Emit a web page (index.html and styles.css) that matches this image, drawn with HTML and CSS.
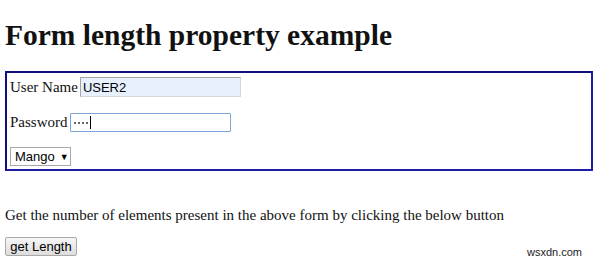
FILE: index.html
```html
<!DOCTYPE html>
<html>
<head>
<meta charset="utf-8">
<link rel="stylesheet" href="styles.css">
</head>
<body>
<h1 class="title">Form length property example</h1>
<form class="box">
  <div class="row"><span>User Name</span><input class="field filled" type="text" value="USER2"></div>
  <div class="row"><span>Password</span><span class="field focused"><span class="dot"></span><span class="dot"></span><span class="dot"></span><span class="dot"></span><span class="caret"></span></span></div>
  <div class="row"><span class="select">Mango <span class="arrow">▼</span></span></div>
</form>
<p class="info">Get the number of elements present in the above form by clicking the below button</p>
<button class="btn" type="button">get Length</button>
<span class="mark">wsxdn.com</span>
</body>
</html>
```
FILE: styles.css
```css
html, body { margin: 0; padding: 0; background: #fff; }
body {
  font-family: "Liberation Serif", "Times New Roman", serif;
  font-size: 15px;
  color: #111;
  padding: 0 5px;
  position: relative;
  height: 264px;
  overflow: hidden;
}
.title {
  font-size: 29.5px;
  font-weight: bold;
  margin: 0;
  padding-top: 18px;
  line-height: 34px;
  height: 53px;
}
.box {
  box-sizing: border-box;
  width: 588px;
  height: 100px;
  border: 2px solid #10107a;
  border-right-color: #1d1da8;
  border-bottom-color: #1d1da8;
  padding: 4px 3px;
  display: flex;
  flex-direction: column;
  gap: 16px;
}
.row {
  display: flex;
  align-items: center;
  gap: 2px;
  height: 20px;
}
.field {
  box-sizing: border-box;
  width: 161px;
  height: 20px;
  font-family: "Liberation Sans", Arial, sans-serif;
  font-size: 13px;
  padding: 0 2px;
  margin: 0;
  color: #000;
}
.filled {
  background: #e8f0fe;
  border: 1px solid #a6a6a6;
  border-right-color: #d8d8d8;
  border-bottom-color: #d8d8d8;
  outline: none;
}
.focused {
  display: flex;
  align-items: center;
  gap: 2px;
  height: 19px;
  padding-left: 3px;
  border: 1px solid #7ea5d6;
  border-radius: 1px;
  background: #fff;
}
.dot { width: 2px; height: 2px; border-radius: 50%; background: #333; }
.caret { width: 1px; height: 13px; background: #000; margin-left: 0; }
.select {
  box-sizing: border-box;
  display: inline-flex;
  align-items: center;
  height: 19px;
  width: 61px;
  border: 1px solid #a9a9a9;
  padding: 0 4px;
  font-family: "Liberation Sans", Arial, sans-serif;
  font-size: 13px;
  color: #000;
  background: #fff;
  margin-top: -1px;
}
.arrow { font-size: 9px; margin-left: 5px; }
.info { margin: 35px 0 0; line-height: 18px; }
.btn {
  box-sizing: border-box;
  margin-top: 13px;
  width: 72px;
  height: 19px;
  padding: 0;
  font-family: "Liberation Sans", Arial, sans-serif;
  font-size: 13px;
  color: #000;
  background: linear-gradient(#f6f6f6, #dddddd);
  border: 1px solid #a9a9a9;
  border-radius: 2px;
}
.mark {
  position: absolute;
  left: 527px;
  top: 246px;
  font-family: "Liberation Sans", Arial, sans-serif;
  font-size: 11px;
  color: #222;
}
```
